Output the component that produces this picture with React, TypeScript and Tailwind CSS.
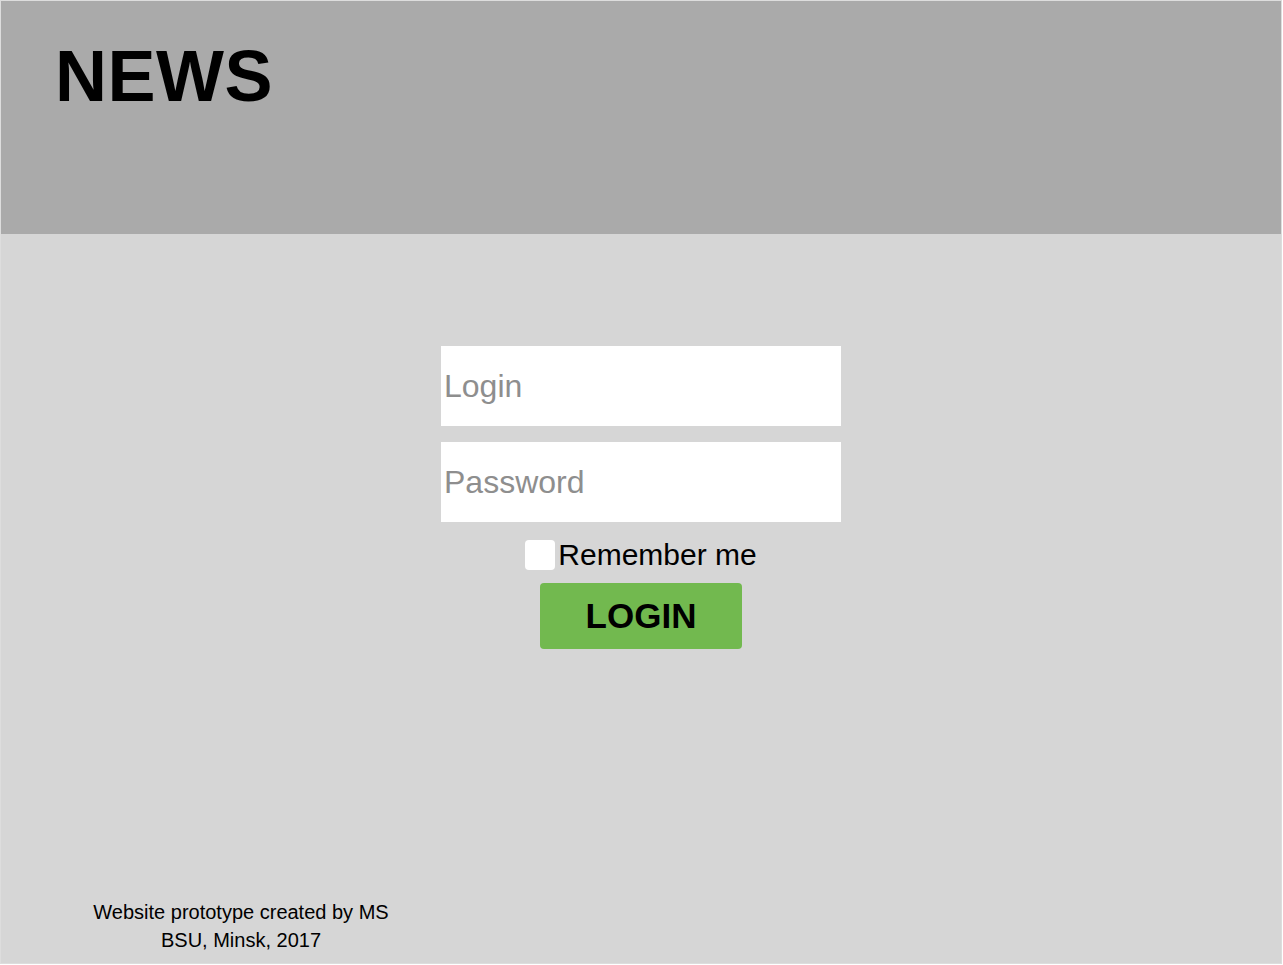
import React from "react";

export default function App() {
  return (
    <div className="w-[1282px] h-[964px] border border-[#dddddd] bg-[#d6d6d6] flex flex-col" style={{ fontFamily: '"Liberation Sans", Arial, sans-serif' }}>
      <header className="h-[233px] bg-[#aaaaaa] pt-[39px] pl-[54px] shrink-0">
        <h1 className="text-[72px] leading-[72px] font-bold text-black tracking-[0.5px]" style={{ fontFamily: '"Liberation Sans", Arial, sans-serif' }}>NEWS</h1>
      </header>
      <main className="flex-1 flex flex-col items-center pt-[112px]">
        <input
          type="text"
          placeholder="Login"
          className="w-[400px] h-[80px] bg-white px-[3px] text-[32px] text-black placeholder:text-[#8e8e8e] outline-none"
        />
        <input
          type="password"
          placeholder="Password"
          className="mt-[16px] w-[400px] h-[80px] bg-white px-[3px] text-[32px] text-black placeholder:text-[#8e8e8e] outline-none"
        />
        <label className="mt-[16px] h-[34px] flex items-center">
          <input type="checkbox" className="appearance-none w-[30px] h-[30px] bg-white rounded-[4px]" />
          <span className="ml-[3px] text-[30px] leading-[34px] text-black">Remember me</span>
        </label>
        <button className="mt-[11px] w-[202px] h-[66px] bg-[#72b94f] rounded-[4px] text-[35px] font-bold text-black">LOGIN</button>
        <footer className="mt-auto self-start w-[480px] pb-[9px] text-center text-[20px] leading-[28px] text-black">
          <div>Website prototype created by MS</div>
          <div>BSU, Minsk, 2017</div>
        </footer>
      </main>
    </div>
  );
}
